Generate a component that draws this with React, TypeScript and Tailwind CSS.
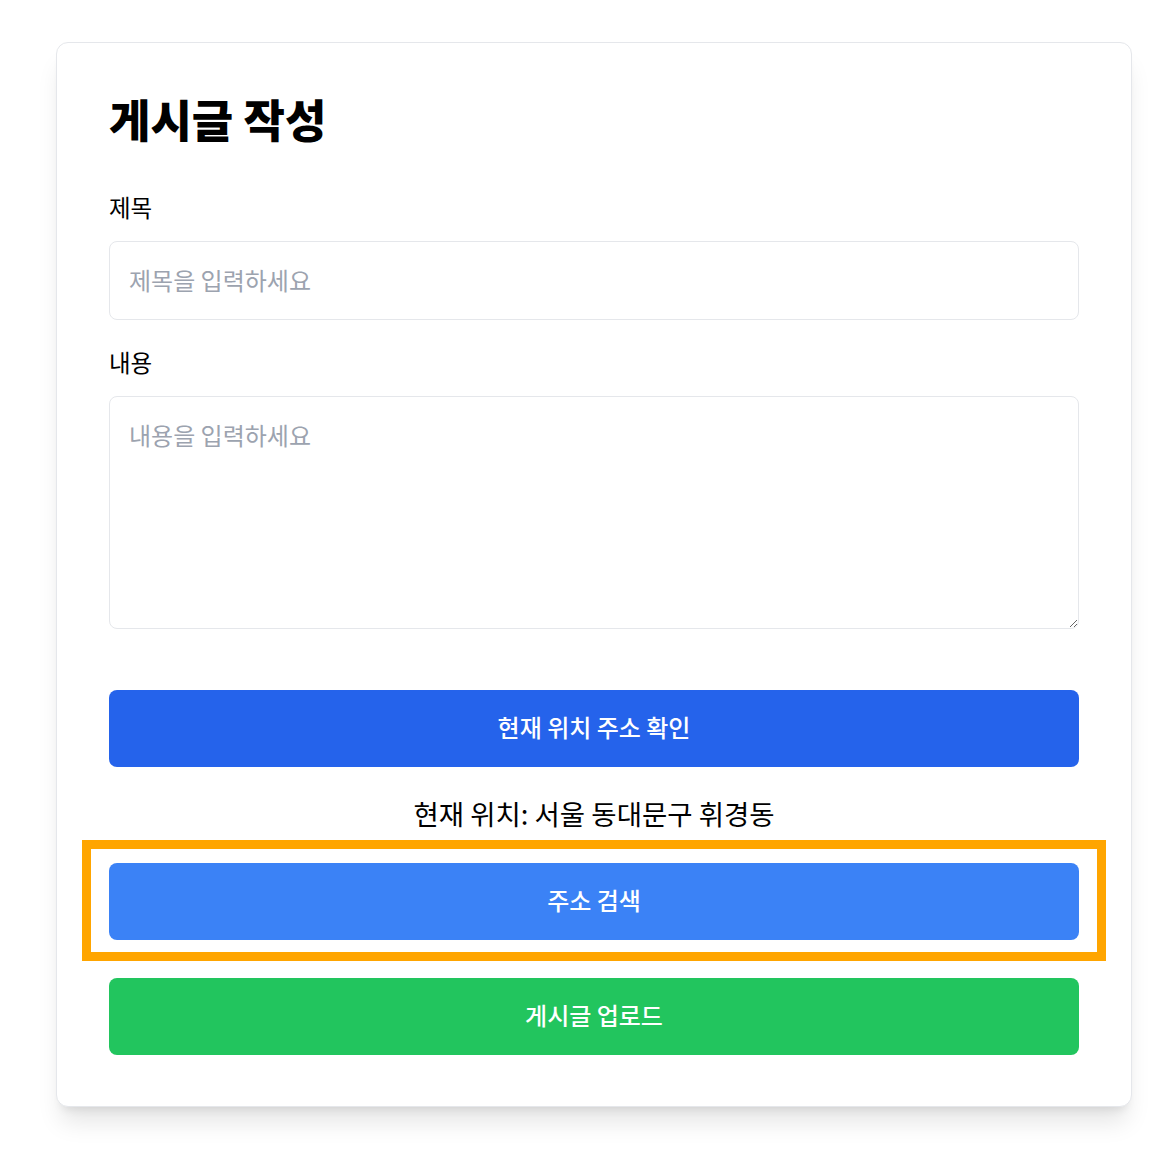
export default function App() {
  return (
    <div className="min-h-[1150px] bg-white pt-[42px] font-['Noto_Sans_CJK_KR','Noto_Sans',sans-serif] text-black">
      <div className="ml-[56px] w-[1076px] rounded-xl border border-gray-200 bg-white px-[52px] pt-[48px] pb-[51px] shadow-xl">
        <h1 className="text-[45px] leading-[56px] font-extrabold">게시글 작성</h1>

        <label className="mt-[44px] block text-[23.5px] leading-[32px]">제목</label>
        <input
          placeholder="제목을 입력하세요"
          className="mt-[18px] block h-[79px] w-full rounded-lg border border-gray-200 px-[19px] pb-[3px] text-[24px] placeholder:text-[#9ca3af] focus:outline-none"
        />

        <label className="mt-[26px] block text-[23.5px] leading-[32px]">내용</label>
        <textarea
          placeholder="내용을 입력하세요"
          className="mt-[18px] block h-[233px] w-full rounded-lg border border-gray-200 px-[19px] pt-[22px] pb-[20px] text-[24px] leading-[32px] placeholder:text-[#9ca3af] focus:outline-none"
        />

        <button className="mt-[61px] block h-[77px] w-full rounded-lg bg-[#2563eb] pb-[3px] text-[24px] font-medium text-white">
          현재 위치 주소 확인
        </button>

        <p className="mt-[28px] text-center text-[27.5px] leading-[36px]">현재 위치: 서울 동대문구 휘경동</p>

        <div className="relative mt-[32px]">
          <button className="block h-[77px] w-full rounded-lg bg-[#3b82f6] pb-[3px] text-[24px] font-medium text-white">
            주소 검색
          </button>
          <div className="pointer-events-none absolute -top-[23px] -right-[27px] -bottom-[21px] -left-[27px] border-[9px] border-[#ffa500]" />
        </div>

        <button className="mt-[38px] block h-[77px] w-full rounded-lg bg-[#22c55e] pb-[3px] text-[24px] font-medium text-white">
          게시글 업로드
        </button>
      </div>
    </div>
  );
}
